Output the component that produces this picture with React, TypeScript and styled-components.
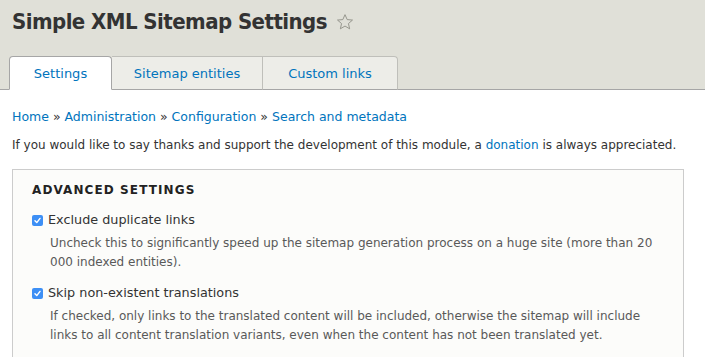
import * as React from "react";
import styled, { createGlobalStyle } from "styled-components";

const GlobalStyle = createGlobalStyle`
  html, body {
    margin: 0;
    padding: 0;
    background: #fff;
  }
  body {
    font-family: "DejaVu Sans", "Liberation Sans", sans-serif;
    font-size: 12.5px;
    color: #333;
  }
`;

const Header = styled.header`
  background: #e0e0d8;
  border-bottom: 1px solid #a6a6a6;
  padding: 8px 0 0 9px;
`;

const TitleRow = styled.div`
  display: flex;
  align-items: center;
  gap: 9px;
  height: 27px;
  padding-left: 3px;
`;

const Title = styled.h1`
  margin: 0;
  font-family: "DejaVu Sans Condensed", "DejaVu Sans", sans-serif;
  font-size: 22px;
  font-weight: bold;
  color: #333;
  letter-spacing: -0.55px;
`;

const Tabs = styled.nav`
  display: flex;
  margin-top: 21px;
  margin-bottom: -1px;
`;

const Tab = styled.a<{ $active?: boolean; $first?: boolean; $last?: boolean; $width: number }>`
  display: flex;
  align-items: center;
  justify-content: center;
  height: 34px;
  padding-top: 1px;
  box-sizing: border-box;
  width: ${(p) => p.$width}px;
  background: ${(p) => (p.$active ? "#fff" : "#ededE8")};
  border: 1px solid ${(p) => (p.$active ? "#a6a6a6" : "#bfbfba")};
  border-bottom: ${(p) => (p.$active ? "1px solid #fff" : "1px solid #a6a6a6")};
  border-left-width: ${(p) => (p.$first ? "1px" : "0")};
  border-radius: ${(p) => (p.$active ? "4px 4px 0 0" : p.$last ? "0 4px 0 0" : "0")};
  color: #0074bd;
  font-size: 13px;
  text-decoration: none;
`;

const Content = styled.main`
  padding: 17px 12px 0 12px;
`;

const Breadcrumb = styled.div`
  line-height: 20px;
  color: #333;
`;

const Link = styled.a`
  color: #0074bd;
  text-decoration: none;
`;

const Intro = styled.p`
  margin: 8px 0 0 0;
  font-size: 12px;
  line-height: 20px;
  white-space: nowrap;
`;

const Fieldset = styled.fieldset`
  margin: 14px 0 0 0;
  width: 672px;
  box-sizing: border-box;
  border: 1px solid #ccc;
  background: #fcfcfa;
  padding: 10px 0 14px 19px;
  min-width: 0;
`;

const Legend = styled.div`
  font-size: 12px;
  font-weight: bold;
  letter-spacing: 1.1px;
  text-transform: uppercase;
  color: #222;
  line-height: 20px;
`;

const Item = styled.div<{ $first?: boolean }>`
  margin-top: ${(p) => (p.$first ? "10px" : "11px")};
`;

const CheckRow = styled.label`
  display: flex;
  align-items: center;
  gap: 5px;
  line-height: 20px;
  font-size: 12.8px;
  color: #333;
`;

const Box = styled.span`
  width: 11px;
  height: 11px;
  border-radius: 2px;
  background: #3d8ff5;
  display: flex;
  align-items: center;
  justify-content: center;
  flex: none;
`;

const Description = styled.div`
  margin: 4px 0 0 18px;
  font-size: 12px;
  line-height: 19px;
  color: #595959;
  max-width: 610px;
`;

const Star = () => (
  <svg width="18" height="18" viewBox="0 0 24 24" aria-hidden>
    <path
      d="M12 2.2l2.9 6.6 7.1.6-5.4 4.7 1.6 7-6.2-3.7-6.2 3.7 1.6-7L2 9.4l7.1-.6z"
      fill="none"
      stroke="#8f8f86"
      strokeWidth="1.2"
      strokeLinejoin="round"
    />
  </svg>
);

const Check = () => (
  <svg width="9" height="9" viewBox="0 0 10 10" aria-hidden>
    <path d="M2.2 5.2l2 2.1 3.6-4.6" fill="none" stroke="#fff" strokeWidth="1.6" strokeLinecap="round" strokeLinejoin="round" />
  </svg>
);

const Checkbox = (props: { label: string; children: React.ReactNode; first?: boolean }) => (
  <Item $first={props.first}>
    <CheckRow>
      <Box>
        <Check />
      </Box>
      {props.label}
    </CheckRow>
    <Description>{props.children}</Description>
  </Item>
);

const App = () => (
  <>
    <GlobalStyle />
    <Header>
      <TitleRow>
        <Title>Simple XML Sitemap Settings</Title>
        <Star />
      </TitleRow>
      <Tabs>
        <Tab $active $first $width={103}>Settings</Tab>
        <Tab $width={151}>Sitemap entities</Tab>
        <Tab $last $width={135}>Custom links</Tab>
      </Tabs>
    </Header>
    <Content>
      <Breadcrumb>
        <Link href="#">Home</Link> » <Link href="#">Administration</Link> »{" "}
        <Link href="#">Configuration</Link> » <Link href="#">Search and metadata</Link>
      </Breadcrumb>
      <Intro>
        If you would like to say thanks and support the development of this module, a{" "}
        <Link href="#">donation</Link> is always appreciated.
      </Intro>
      <Fieldset>
        <Legend>Advanced settings</Legend>
        <Checkbox first label="Exclude duplicate links">
          Uncheck this to significantly speed up the sitemap generation process on a huge site (more than 20
          000 indexed entities).
        </Checkbox>
        <Checkbox label="Skip non-existent translations">
          If checked, only links to the translated content will be included, otherwise the sitemap will include
          links to all content translation variants, even when the content has not been translated yet.
        </Checkbox>
      </Fieldset>
    </Content>
  </>
);

export default App;
